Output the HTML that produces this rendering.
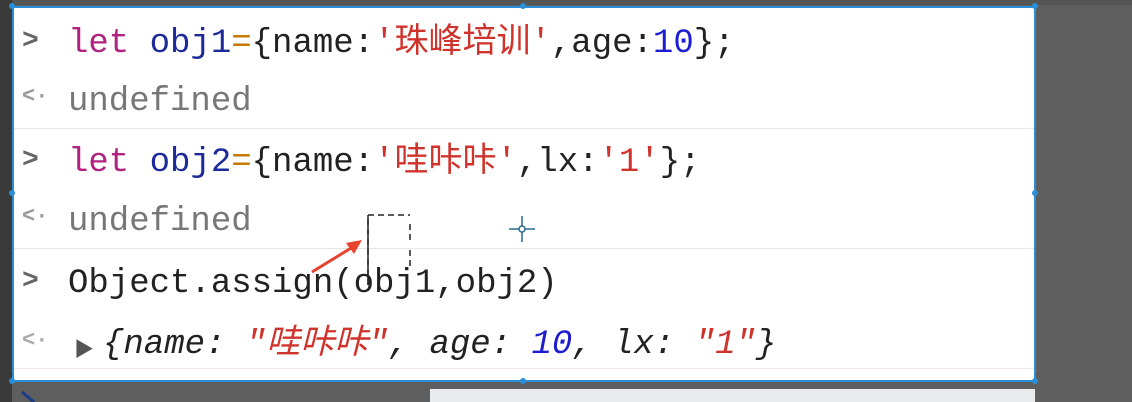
<!DOCTYPE html>
<html><head><meta charset="utf-8"><style>
*{margin:0;padding:0;box-sizing:border-box}
body{width:1132px;height:402px;background:#5e5e5e;position:relative;overflow:hidden;font-family:"Liberation Mono","Noto Sans CJK SC",monospace}
#left{position:absolute;left:0;top:0;width:12px;height:402px;background:#3a3a3a}
#top{position:absolute;left:0;top:0;width:1132px;height:5px;background:#555}
#panel{position:absolute;left:12px;top:6px;width:1024px;height:376px;background:#fff;border:2px solid #2a8fd8}
.sep{position:absolute;left:0;right:0;height:1px;background:#e6e6e6}
.ln{position:absolute;left:54px;font-size:34px;line-height:40px;white-space:pre;color:#222}
.pr{position:absolute;left:8px;font-size:28px;color:#666;font-weight:bold}
.k{color:#b0237e}.v{color:#1c2a9a}.o{color:#c27a00}.s{color:#d0332b}.n{color:#1c1cd0}.g{color:#777}
.i{font-style:italic}
.dot{position:absolute;width:6px;height:6px;border-radius:3px;background:#2a8fd8}
#tb{position:absolute;left:430px;top:389px;width:605px;height:13px;background:#e8ecef}
</style></head><body>
<div id="top"></div><div id="left"></div>
<div id="panel">
 <div class="pr" style="top:18px">&gt;</div>
 <div class="ln" style="top:16px"><span class="k">let</span> <span class="v">obj1</span><span class="o">=</span>{name:<span class="s">'珠峰培训'</span>,age:<span class="n">10</span>};</div>
 <div class="pr g" style="top:76px;font-size:22px;color:#999">&lt;·</div>
 <div class="ln g" style="top:74px">undefined</div>
 <div class="sep" style="top:120px"></div>
 <div class="pr" style="top:137px">&gt;</div>
 <div class="ln" style="top:135px"><span class="k">let</span> <span class="v">obj2</span><span class="o">=</span>{name:<span class="s">'哇咔咔'</span>,lx:<span class="s">'1'</span>};</div>
 <div class="pr g" style="top:196px;font-size:22px;color:#999">&lt;·</div>
 <div class="ln g" style="top:194px">undefined</div>
 <div class="sep" style="top:240px"></div>
 <div class="pr" style="top:258px">&gt;</div>
 <div class="ln" style="top:256px">Object.assign(obj1,obj2)</div>
 <div class="pr g" style="top:320px;font-size:22px;color:#aaa">&lt;·</div>
 <div style="position:absolute;left:60px;top:325px;font-size:20px;color:#555">▶</div>
 <div class="ln i" style="top:317px;left:89px">{name: <span class="s">"哇咔咔"</span>, age: <span class="n">10</span>, lx: <span class="s">"1"</span>}</div>
 <div class="sep" style="top:360px;background:#f3e6e6"></div>
</div>
<div class="dot" style="left:9px;top:3px"></div>
<div class="dot" style="left:520px;top:3px"></div>
<div class="dot" style="left:1032px;top:3px"></div>
<div class="dot" style="left:9px;top:190px"></div>
<div class="dot" style="left:1032px;top:190px"></div>
<div class="dot" style="left:9px;top:378px"></div>
<div class="dot" style="left:520px;top:378px"></div>
<div class="dot" style="left:1032px;top:378px"></div>
<div id="tb"></div>
<svg style="position:absolute;left:0;top:0" width="1132" height="402">
 <line x1="312" y1="272" x2="356" y2="245" stroke="#e8432f" stroke-width="3"/>
 <polygon points="362,240 346,243 354,254" fill="#e8432f"/>
 <path d="M368 285 V215 H410 M410 224 V240 M410 250 V270" stroke="#222" stroke-width="1.5" fill="none" stroke-dasharray="6,4"/>
 <line x1="368" y1="215" x2="368" y2="285" stroke="#222" stroke-width="1.5"/>
 <g stroke="#2b6a8f" stroke-width="1.5" fill="none"><line x1="522" y1="216" x2="522" y2="242"/><line x1="509" y1="229" x2="535" y2="229"/><circle cx="522" cy="229" r="3" fill="#fff"/></g>
 <line x1="22" y1="392" x2="34" y2="402" stroke="#1a3a8a" stroke-width="3"/>
</svg>
</body></html>
